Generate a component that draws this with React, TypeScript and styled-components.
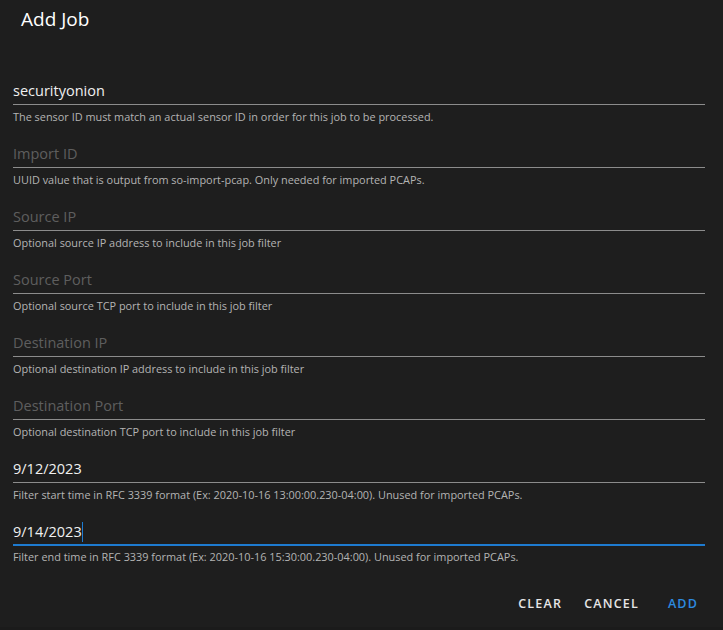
import React from "react";
import styled, { createGlobalStyle } from "styled-components";

const Global = createGlobalStyle`
  html, body { margin: 0; padding: 0; background: #1b1b1b; }
  body { font-family: "Open Sans", "Noto Sans", sans-serif; }
`;

const Card = styled.div`
  width: 723px;
  height: 627px;
  background: #1e1e1e;
  display: flex;
  flex-direction: column;
  box-sizing: border-box;
`;

const Title = styled.div`
  padding: 5px 21px 0;
  height: 75px;
  box-sizing: border-box;
  font-size: 19px;
  line-height: 28px;
  color: #ffffff;
  font-weight: 500;
`;

const Fields = styled.div`
  display: flex;
  flex-direction: column;
  padding: 0 18px 0 13px;
`;

const Field = styled.div`
  height: 63px;
  display: flex;
  flex-direction: column;
`;

const InputRow = styled.div<{ $focused?: boolean }>`
  height: 30px;
  box-sizing: border-box;
  padding-top: 5px;
  font-size: 14.5px;
  line-height: 22px;
  border-bottom: ${(p) => (p.$focused ? "2px solid #1e7bd0" : "1px solid #8c8c8c")};
  margin-bottom: ${(p) => (p.$focused ? "-1px" : "0")};
  display: flex;
  align-items: flex-start;
`;

const Value = styled.span`
  color: #f0f0f0;
`;

const Placeholder = styled.span`
  color: #5e5e5e;
`;

const Caret = styled.span`
  display: inline-block;
  width: 1.5px;
  height: 20px;
  margin-top: 1px;
  background: #1e7bd0;
`;

const Hint = styled.div`
  margin-top: 4px;
  font-size: 10.9px;
  line-height: 16px;
  color: #b4b4b4;
`;

const Actions = styled.div`
  display: flex;
  justify-content: flex-end;
  align-items: center;
  gap: 4px;
  padding: 6px 8px 0 0;
`;

const Btn = styled.button<{ $primary?: boolean }>`
  background: none;
  border: none;
  font-family: inherit;
  font-size: 12.5px;
  font-weight: 600;
  letter-spacing: 1.2px;
  color: ${(p) => (p.$primary ? "#2d8be0" : "#e6e6e6")};
  padding: 0 8px;
  min-width: 64px;
  height: 36px;
  cursor: pointer;
`;

type F = { value?: string; placeholder?: string; hint: string; focused?: boolean };

const fields: F[] = [
  { value: "securityonion", hint: "The sensor ID must match an actual sensor ID in order for this job to be processed." },
  { placeholder: "Import ID", hint: "UUID value that is output from so-import-pcap. Only needed for imported PCAPs." },
  { placeholder: "Source IP", hint: "Optional source IP address to include in this job filter" },
  { placeholder: "Source Port", hint: "Optional source TCP port to include in this job filter" },
  { placeholder: "Destination IP", hint: "Optional destination IP address to include in this job filter" },
  { placeholder: "Destination Port", hint: "Optional destination TCP port to include in this job filter" },
  { value: "9/12/2023", hint: "Filter start time in RFC 3339 format (Ex: 2020-10-16 13:00:00.230-04:00). Unused for imported PCAPs." },
  { value: "9/14/2023", focused: true, hint: "Filter end time in RFC 3339 format (Ex: 2020-10-16 15:30:00.230-04:00). Unused for imported PCAPs." },
];

export default function App() {
  return (
    <>
      <Global />
      <Card>
        <Title>Add Job</Title>
        <Fields>
          {fields.map((f, i) => (
            <Field key={i}>
              <InputRow $focused={f.focused}>
                {f.value ? <Value>{f.value}</Value> : <Placeholder>{f.placeholder}</Placeholder>}
                {f.focused && <Caret />}
              </InputRow>
              <Hint>{f.hint}</Hint>
            </Field>
          ))}
        </Fields>
        <Actions>
          <Btn>CLEAR</Btn>
          <Btn>CANCEL</Btn>
          <Btn $primary>ADD</Btn>
        </Actions>
      </Card>
    </>
  );
}
